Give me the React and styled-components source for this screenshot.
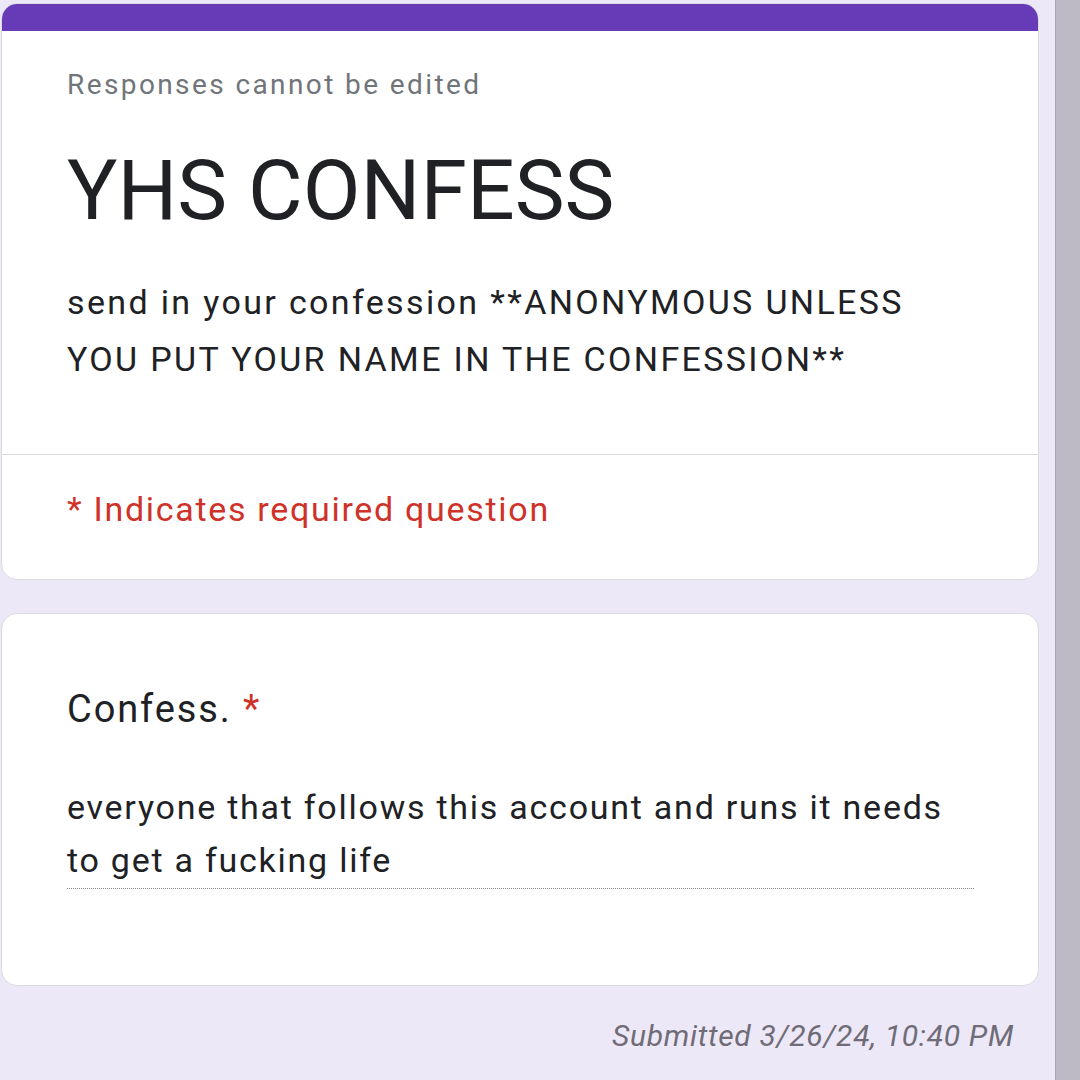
import React from 'react';
import styled, { createGlobalStyle } from 'styled-components';

const GlobalStyle = createGlobalStyle`
  html, body {
    margin: 0;
    padding: 0;
    background: #ede8f7;
  }
  body {
    font-family: Roboto, "Noto Sans", "Liberation Sans", sans-serif;
    color: #202124;
  }
`;

const Page = styled.div`
  display: flex;
  width: 1080px;
  height: 1080px;
  overflow: hidden;
  background: #ede8f7;
`;

const Column = styled.main`
  flex: 1;
  display: flex;
  flex-direction: column;
  gap: 33px;
  padding: 3px 16px 0 1px;
`;

const Scrollbar = styled.div`
  width: 24px;
  background: #bdb9c5;
  border-left: 1px solid #aaa6b2;
`;

const Card = styled.section`
  background: #fff;
  border: 1px solid #dadce0;
  border-radius: 16px;
  overflow: hidden;
`;

const AccentBar = styled.div`
  height: 27px;
  background: #673ab7;
`;

const Header = styled.div`
  padding: 34px 60px 66px 65px;
  border-bottom: 1px solid #dadce0;
`;

const Note = styled.div`
  font-size: 28px;
  line-height: 40px;
  letter-spacing: 2.4px;
  color: #70757a;
`;

const Title = styled.h1`
  margin: 36px 0 0;
  font-size: 84px;
  line-height: 100px;
  font-weight: 400;
  color: #202124;
`;

const Description = styled.p`
  margin: 33px 0 0;
  font-size: 34px;
  line-height: 57px;
  letter-spacing: 2.35px;
  color: #202124;
`;

const Required = styled.div`
  padding: 34px 64px 50px 65px;
  font-size: 34px;
  line-height: 40px;
  letter-spacing: 1.7px;
  color: #cf3228;
`;

const Question = styled.div`
  padding: 71px 64px 96px 65px;
`;

const Label = styled.div`
  font-size: 38px;
  line-height: 48px;
  letter-spacing: 1.9px;
  color: #202124;

  & span {
    color: #cf3228;
  }
`;

const Answer = styled.div`
  margin-top: 48px;
  font-size: 34px;
  line-height: 53px;
  letter-spacing: 1.75px;
  color: #202124;
  border-bottom: 1px dotted #80868b;
  padding-bottom: 1px;
`;

const Submitted = styled.div`
  margin-top: -3px;
  margin-right: 25px;
  align-self: flex-end;
  font-size: 30px;
  line-height: 40px;
  letter-spacing: 0.7px;
  font-style: italic;
  color: #6f6c78;
`;

export default function App() {
  return (
    <Page>
      <GlobalStyle />
      <Column>
        <Card>
          <AccentBar />
          <Header>
            <Note>Responses cannot be edited</Note>
            <Title>YHS CONFESS</Title>
            <Description>
              send in your confession **ANONYMOUS UNLESS YOU PUT YOUR NAME IN THE CONFESSION**
            </Description>
          </Header>
          <Required>* Indicates required question</Required>
        </Card>
        <Card>
          <Question>
            <Label>
              Confess. <span>*</span>
            </Label>
            <Answer>everyone that follows this account and runs it needs to get a fucking life</Answer>
          </Question>
        </Card>
        <Submitted>Submitted 3/26/24, 10:40 PM</Submitted>
      </Column>
      <Scrollbar />
    </Page>
  );
}
